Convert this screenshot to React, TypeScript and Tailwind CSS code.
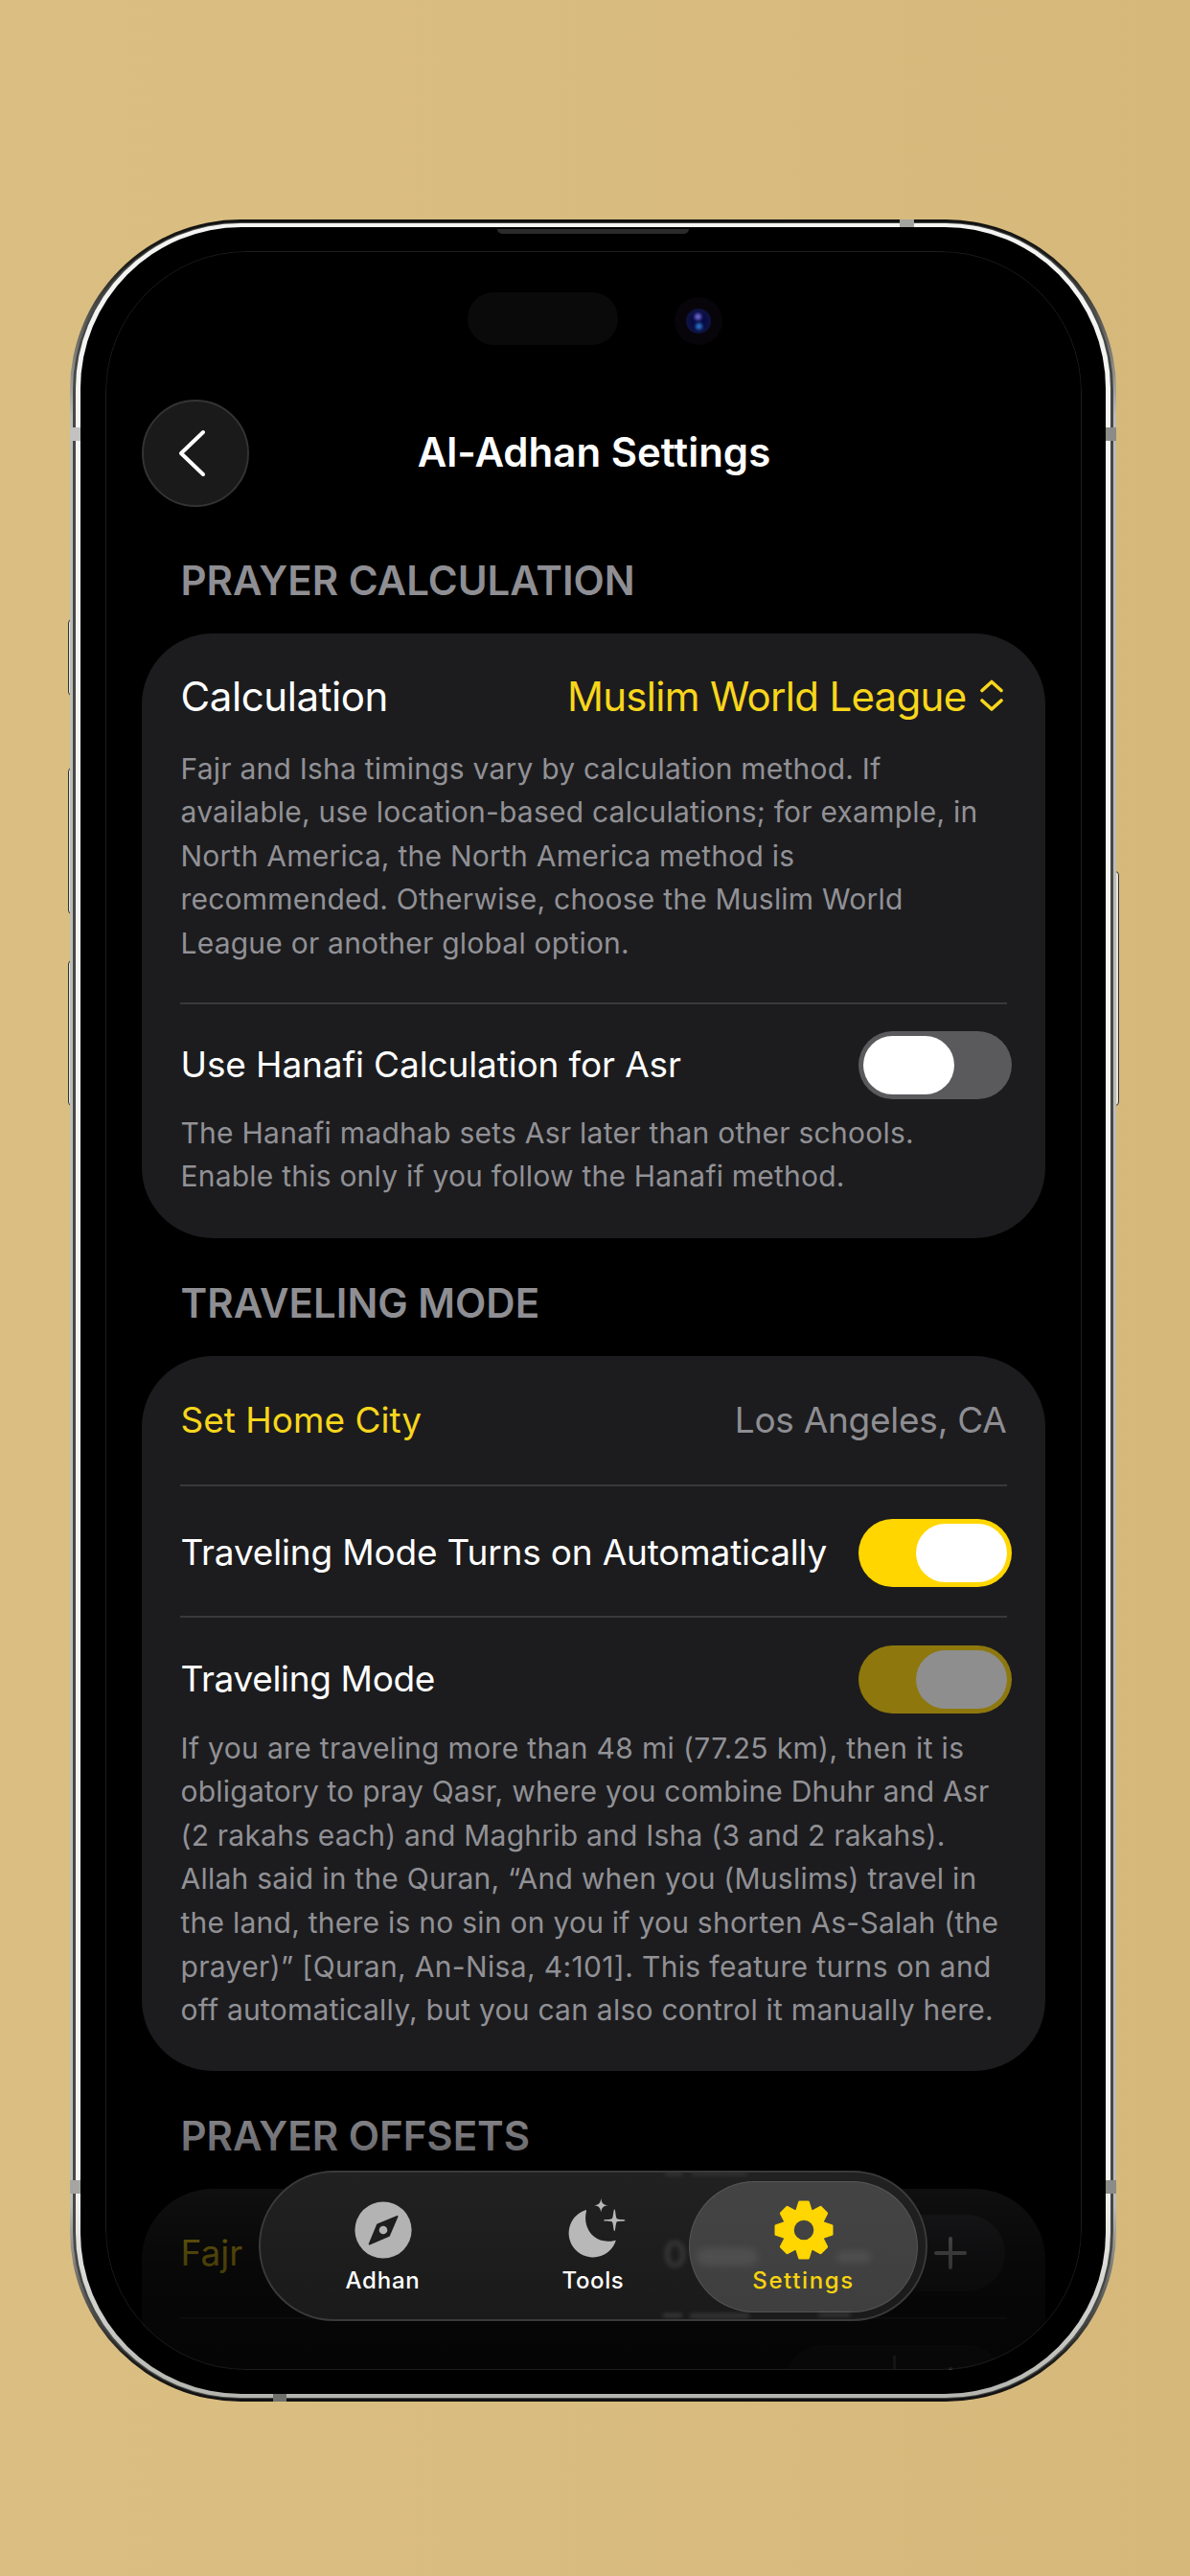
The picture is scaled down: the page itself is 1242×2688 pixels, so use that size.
import type { ReactNode } from "react";

type ToggleState = "off" | "on" | "disabled";

const TRACK: Record<ToggleState, string> = {
  off: "justify-start bg-[#5a5a5d]",
  on: "justify-end bg-[#ffd600]",
  disabled: "justify-end bg-[#8e780d]",
};

function Toggle({ state }: { state: ToggleState }) {
  return (
    <div className={`-mr-[5px] flex h-[71px] w-[160px] shrink-0 items-center rounded-full px-[5px] ${TRACK[state]}`}>
      <div className={`h-[61px] w-[95px] rounded-full ${state === "disabled" ? "bg-[#8e8e8e]" : "bg-white"}`} />
    </div>
  );
}

function SectionTitle({ children, className = "" }: { children: ReactNode; className?: string }) {
  return (
    <h2 className={`mb-[30px] pl-[41px] text-[42px] leading-[50px] font-semibold text-[#8e8e93] ${className}`}>{children}</h2>
  );
}

type Line = string | { text: string; tracking: string };

function Description({ lines, className = "" }: { lines: Line[]; className?: string }) {
  return (
    <p className={`pl-px text-[30px] leading-[45.65px] tracking-[0.22px] whitespace-nowrap text-[#919196] ${className}`}>
      {lines.map((line) => {
        const text = typeof line === "string" ? line : line.text;
        return (
          <span key={text} className={`block ${typeof line === "string" ? "" : line.tracking}`}>
            {text}
          </span>
        );
      })}
    </p>
  );
}

function Divider({ className = "" }: { className?: string }) {
  return <div className={`h-[2px] shrink-0 bg-[#39393b] ${className}`} />;
}

function Card({ children, className = "" }: { children: ReactNode; className?: string }) {
  return <div className={`flex shrink-0 flex-col rounded-[74px] bg-[#1c1c1e] px-[40px] ${className}`}>{children}</div>;
}

function Stepper() {
  return (
    <div className="mr-[2px] flex h-[80px] w-[230px] items-center rounded-full bg-[#2d2d31]">
      <div className="flex flex-1 justify-center">
        <div className="h-[4px] w-[33px] rounded-full bg-white/80" />
      </div>
      <div className="h-[58px] w-[3px] bg-[#77777c]" />
      <div className="flex flex-1 justify-center">
        <svg viewBox="0 0 34 34" className="size-[34px]" stroke="#b4b4b4" strokeWidth="4" strokeLinecap="round">
          <path d="M17 2V32M2 17H32" />
        </svg>
      </div>
    </div>
  );
}

function CompassIcon() {
  return (
    <svg viewBox="-32 -32 64 64" className="size-[64px]">
      <circle r="29.6" fill="#b3b3b4" />
      <path d="M14.6 -14.2L6 5.8L-14.4 14.6L-6 -5.6Z" fill="#1e1e1f" stroke="#1e1e1f" strokeWidth="1.8" strokeLinejoin="round" />
      <circle r="4.3" fill="#b3b3b4" />
    </svg>
  );
}

function MoonIcon() {
  return (
    <svg viewBox="-3 4 64 64" className="size-[64px] overflow-visible" fill="#b8b8b9">
      <path d="M20.9 15.3A25.2 25.2 0 1 0 52.5 47.8C52.9 47 52.4 46.6 51.4 46.9C43.5 48.8 35.4 47.6 29.6 42.6C22 36 19.6 25.6 22 16.2C22.3 15.2 21.8 14.9 20.9 15.3Z" />
      <path d="M37.3 3C38 7.6 39 9.6 44.6 10.3C39 11 38 13 37.3 17.6C36.6 13 35.6 11 30 10.3C35.6 9.6 36.6 7.6 37.3 3Z" />
      <path d="M51.3 14.2C52.5 14.2 52.3 23 54 24.3C55.5 25.3 62.6 24.8 62.6 25.9C62.6 27 55.500 26.3 54 27.3C52.3 28.6 52.5 37.3 51.3 37.3C50.1 37.3 50.3 28.6 48.6 27.3C47.1 26.3 40 27 40 25.9C40 24.8 47.1 25.3 48.6 24.3C50.3 23 50.1 14.2 51.3 14.2Z" />
    </svg>
  );
}

function GearIcon() {
  return (
    <svg viewBox="-32 -32 64 64" className="size-[64px]" fill="#ffd600" stroke="#ffd600">
      <circle r="16.5" fill="none" strokeWidth="12.4" />
      {[0, 45, 90, 135, 180, 225, 270, 315].map((angle) => (
        <path
          key={angle}
          d="M-7.2 -20L-4.4 -29H4.4L7.2 -20Z"
          strokeWidth="3"
          strokeLinejoin="round"
          transform={`rotate(${angle})`}
        />
      ))}
    </svg>
  );
}

function Tab({ icon, label, labelClass, active = false }: { icon: ReactNode; label: string; labelClass: string; active?: boolean }) {
  return (
    <div className="relative flex h-full w-[219.5px] flex-col items-center pt-[28px]">
      {active && (
        <div className="absolute inset-x-[-10px] top-[9px] h-[137px] rounded-full border border-white/10 bg-white/[0.16]" />
      )}
      <div className="relative h-[64px]">{icon}</div>
      <div className={`relative mt-[6px] text-[24px] leading-[30px] font-[550] ${labelClass}`}>{label}</div>
    </div>
  );
}

function TabBar() {
  return (
    <div className="absolute top-[2003px] left-[160.5px] flex h-[157px] w-[698px] justify-center overflow-hidden rounded-full border-2 border-[#3a3a3b] bg-linear-to-b from-[#212122] to-[#1a1a1a]">
      {/* content refracted through the glass */}
      <div className="absolute top-[62px] left-[420px] flex items-center gap-[10px] text-[38px] leading-[46px] font-semibold text-white/[0.12] blur-[2.5px]">
        <span>0</span>
        <span className="mt-[6px] h-[18px] w-[64px] rounded-full bg-white/[0.08] blur-[3px]" />
        <span className="mt-[6px] ml-[72px] h-[10px] w-[36px] rounded-full bg-white/[0.09] blur-[3px]" />
      </div>
      <div className="absolute bottom-px left-[420px] flex gap-[8px] blur-[2px]">
        <div className="h-[4px] w-[20px] bg-white/15" />
        <div className="h-[5px] w-[62px] bg-white/12" />
        <div className="ml-[64px] h-[3px] w-[34px] bg-white/15" />
      </div>
      <div className="absolute top-0 left-[422px] flex gap-[10px] blur-[2px]">
        <div className="h-[3px] w-[18px] bg-white/12" />
        <div className="h-[3px] w-[58px] bg-white/10" />
      </div>
      <Tab icon={<CompassIcon />} label="Adhan" labelClass="tracking-[0.8px] text-white" />
      <Tab icon={<MoonIcon />} label="Tools" labelClass="tracking-[0.6px] text-white" />
      <Tab icon={<GearIcon />} label="Settings" labelClass="tracking-[1.6px] text-[#f8d40f]" active />
    </div>
  );
}

function Screen() {
  return (
    <div className="relative h-[2211px] w-[1019px] overflow-hidden rounded-[147px] bg-black">
      {/* sensor housing */}
      <div className="absolute top-[43px] left-[378px] h-[55px] w-[157px] rounded-full bg-[#0a0a0a]" />
      <div className="absolute top-[48px] left-[594px] flex size-[50px] items-center justify-center rounded-full bg-[#070509]">
        <div className="relative size-[26px] rounded-full bg-radial from-[#070b45] from-35% to-[#17183f]">
          <div className="absolute top-[5px] left-[9px] size-[7px] rounded-full bg-[#6a62c8] blur-[1.5px]" />
          <div className="absolute top-[15px] left-[10px] size-[7px] rounded-full bg-[#2a6fc0] blur-[1.5px]" />
        </div>
      </div>

      <div className="flex flex-col px-[38px] pt-[155px]">
        <header className="grid h-[112px] grid-cols-[112px_1fr_112px] items-center">
          <div className="flex size-[112px] items-center justify-center rounded-full border-2 border-[#333334] bg-[#1a1a1a]">
            <svg viewBox="0 0 30 50" className="mr-[7px] h-[50px] w-[30px]" fill="none" stroke="white" strokeWidth="4" strokeLinecap="round" strokeLinejoin="round">
              <path d="M27 3L4 25L27 47" />
            </svg>
          </div>
          <h1 className="pb-[3px] pl-[2px] text-center text-[42px] leading-[50px] font-semibold text-white">Al-Adhan Settings</h1>
        </header>

        <SectionTitle className="mt-[52px]">PRAYER CALCULATION</SectionTitle>
        <Card className="h-[630.5px]">
          <div className="mt-[39px] flex h-[52px] items-center justify-between pl-px text-[42px]">
            <span className="tracking-[-0.4px] text-white">Calculation</span>
            <span className="flex items-center text-[#f8d61c]">
              <span className="tracking-[-0.7px]">Muslim World League</span>
              <svg viewBox="0 0 24 34" className="mr-[4px] ml-[14px] h-[34px] w-[24px]" fill="none" stroke="currentColor" strokeWidth="3.6" strokeLinecap="round" strokeLinejoin="round">
                <path d="M2 11.5L12 2.5L22 11.5M2 22L12 31L22 22" />
              </svg>
            </span>
          </div>
          <Description
            className="mt-[27.5px]"
            lines={[
              "Fajr and Isha timings vary by calculation method. If",
              "available, use location-based calculations; for example, in",
              { text: "North America, the North America method is", tracking: "tracking-[0.25px]" },
              "recommended. Otherwise, choose the Muslim World",
              "League or another global option.",
            ]}
          />
          <Divider className="mt-[38px]" />
          <div className="mt-[28px] flex h-[71px] items-center justify-between pl-px text-[37px] text-white">
            <span className="pb-px tracking-[-0.13px]">Use Hanafi Calculation for Asr</span>
            <Toggle state="off" />
          </div>
          <Description
            className="mt-[13px]"
            lines={[
              { text: "The Hanafi madhab sets Asr later than other schools.", tracking: "tracking-[0.25px]" },
              "Enable this only if you follow the Hanafi method.",
            ]}
          />
        </Card>

        <SectionTitle className="mt-[43.5px]">TRAVELING MODE</SectionTitle>
        <Card className="h-[745.5px]">
          <div className="flex h-[134px] items-center justify-between pl-px text-[37px]">
            <span className="text-[#f8d61c]">Set Home City</span>
            <span className="tracking-[-0.26px] text-[#8e8e93]">Los Angeles, CA</span>
          </div>
          <Divider />
          <div className="flex h-[135px] items-center justify-between pt-[3px] pl-px text-[37px] text-white">
            <span className="pb-px tracking-[-0.18px]">Traveling Mode Turns on Automatically</span>
            <Toggle state="on" />
          </div>
          <Divider />
          <div className="mt-[29px] flex h-[71px] items-center justify-between pl-px text-[37px] text-white">
            <span className="pb-[2px] tracking-[-0.34px]">Traveling Mode</span>
            <Toggle state="disabled" />
          </div>
          <Description
            className="mt-[13.5px]"
            lines={[
              { text: "If you are traveling more than 48 mi (77.25 km), then it is", tracking: "tracking-[0.34px]" },
              "obligatory to pray Qasr, where you combine Dhuhr and Asr",
              "(2 rakahs each) and Maghrib and Isha (3 and 2 rakahs).",
              { text: "Allah said in the Quran, “And when you (Muslims) travel in", tracking: "tracking-[0.24px]" },
              { text: "the land, there is no sin on you if you shorten As-Salah (the", tracking: "tracking-[0.25px]" },
              { text: "prayer)” [Quran, An-Nisa, 4:101]. This feature turns on and", tracking: "tracking-[0.35px]" },
              { text: "off automatically, but you can also control it manually here.", tracking: "tracking-[0.25px]" },
            ]}
          />
        </Card>

        <SectionTitle className="mt-[43.5px]">PRAYER OFFSETS</SectionTitle>
        <Card className="h-[400px]">
          <div className="flex h-[134px] items-center justify-between pl-px text-[37px]">
            <span className="text-[#f8d61c]">Fajr</span>
            <Stepper />
          </div>
          <Divider />
          <div className="flex h-[134px] items-center justify-end">
            <Stepper />
          </div>
        </Card>
      </div>

      {/* bottom scroll-edge fade */}
      <div className="absolute inset-x-0 bottom-0 h-[300px] bg-[linear-gradient(to_bottom,transparent_0%,rgba(0,0,0,.08)_12%,rgba(0,0,0,.25)_24%,rgba(0,0,0,.46)_37%,rgba(0,0,0,.68)_58%,rgba(0,0,0,.79)_78%,rgba(0,0,0,.83)_100%)]" />
      <TabBar />
      <div className="absolute inset-0 rounded-[147px] border border-[#1c1c1c]" />
    </div>
  );
}

const SIDE_BUTTON = "absolute w-[5px] border border-[#33332f] bg-[#e4e4e0]";

export default function App() {
  return (
    <div className="flex h-[2688px] w-[1242px] flex-col bg-linear-to-r from-[#dbbf82] to-[#d6b87b] pt-[229px] pl-[73px] font-[Inter,sans-serif]">
      <div className="relative h-[2277px] w-[1092px]">
        <div className={`${SIDE_BUTTON} top-[417px] -left-[2px] h-[80px] rounded-l-[4px]`} />
        <div className={`${SIDE_BUTTON} top-[572px] -left-[2px] h-[153px] rounded-l-[4px]`} />
        <div className={`${SIDE_BUTTON} top-[773px] -left-[2px] h-[152px] rounded-l-[4px]`} />
        <div className={`${SIDE_BUTTON} top-[680px] -right-[3px] h-[245px] rounded-r-[4px]`} />

        <div className="relative h-full rounded-[178px] bg-[linear-gradient(to_bottom,#111_0%,#1c1c1a_2%,#bdbdb8_9%,#bdbdb8_91%,#1c1c1a_98%,#111_100%)] p-[3px]">
          <div className="h-full rounded-[175px] bg-[#474745] px-[3px] py-px">
            <div className="h-full rounded-[172px] bg-[linear-gradient(to_bottom,#f4f4f2_0%,#f4f4f2_90%,#b5b5b0_100%)] px-[5px] py-[4px]">
              <div className="flex h-full flex-col items-center rounded-[168px] bg-black pt-[25px]">
                <Screen />
              </div>
            </div>
          </div>
        </div>

        {/* earpiece slot */}
        <div className="absolute top-[10px] left-[446px] h-[5px] w-[200px] rounded-b-[5px] bg-[#2b2b2b]" />

        {/* antenna bands */}
        <div className="absolute top-0 left-[866px] h-[8px] w-[15px] bg-[#a3a3a0]" />
        <div className="absolute bottom-0 left-[212px] h-[8px] w-[14px] bg-[#6f6f6b]" />
        <div className="absolute top-[217px] left-0 h-[14px] w-[11px] bg-[#c2c2c0]" />
        <div className="absolute top-[217px] right-0 h-[14px] w-[11px] bg-[#8b8b88]" />
        <div className="absolute bottom-[217px] left-0 h-[14px] w-[11px] bg-[#a5a5a2]" />
        <div className="absolute right-0 bottom-[217px] h-[14px] w-[11px] bg-[#8b8b88]" />
      </div>
    </div>
  );
}
